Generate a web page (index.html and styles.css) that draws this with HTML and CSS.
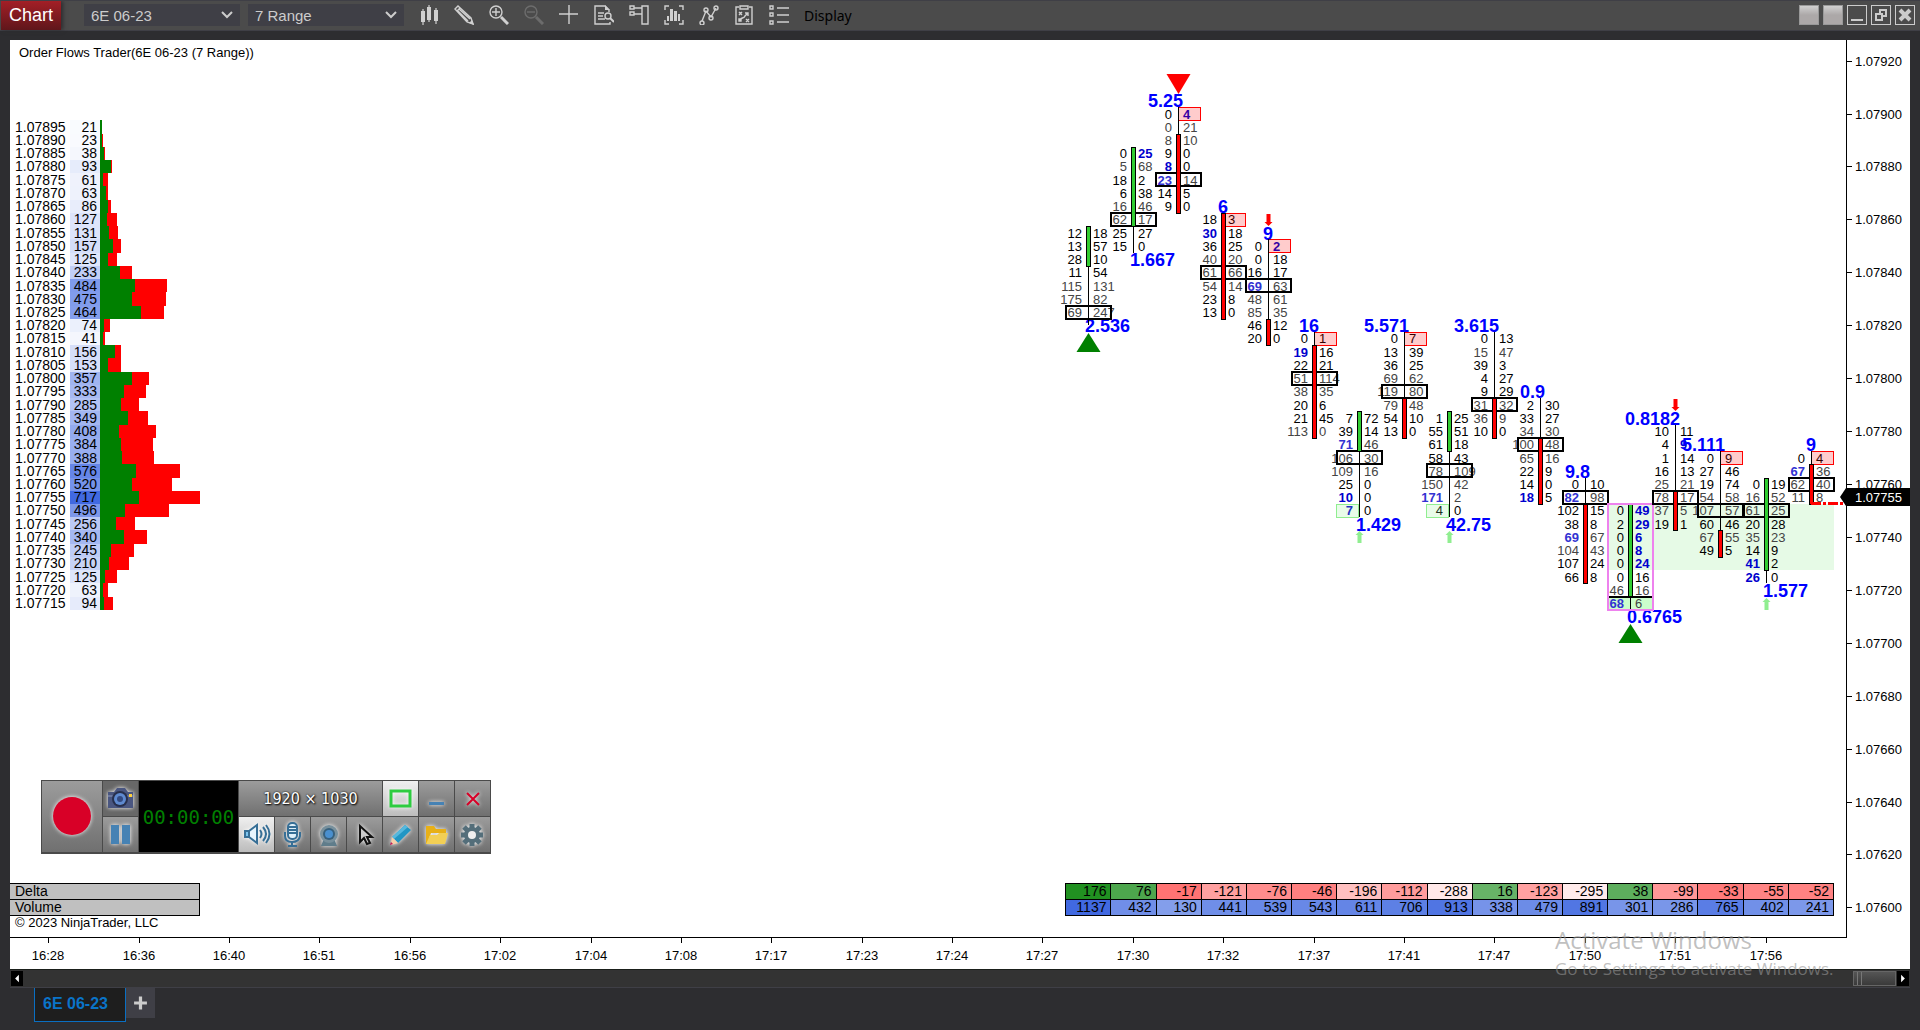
FILE: index.html
```
<!DOCTYPE html>
<html lang="en">
<head>
    <meta charset="UTF-8">
    <meta name="viewport" content="width=device-width, initial-scale=1.0">
    <title>Chart - 6E 06-23</title>
    <link rel="stylesheet" href="styles.css">
</head>
<body>
    <header class="toolbar">
        <h1 class="brand">Chart</h1>
        <select class="picker" aria-label="Instrument">
            <option>6E 06-23</option>
        </select>
        <select class="picker" aria-label="Interval">
            <option>7 Range</option>
        </select>

        <nav class="tools">
            <button class="tool" aria-label="Chart style">
                <svg viewBox="0 0 20 20"><path d="M4 4v16M10 0v17M17 3v16" stroke-width="1.2"/><path class="solid" d="M2 6h4v11H2zM8 2h4v13H8zM15 5h4v11h-4z"/></svg>
            </button>
            <button class="tool" aria-label="Drawing tools">
                <svg viewBox="0 0 20 20"><path d="M1 4l3-3 13 12 2 6-6-2zM3 6l3-3M5 4l11 10M4 6l10 10" /><path class="solid" d="M15 18l3-3 2 5z"/></svg>
            </button>
            <button class="tool" aria-label="Zoom in">
                <svg viewBox="0 0 20 20"><circle cx="7" cy="7" r="6"/><path d="M3 7h8M7 3v8"/><path d="M12 12l7 7" stroke-width="3"/></svg>
            </button>
            <button class="tool" aria-label="Zoom out" disabled>
                <svg viewBox="0 0 20 20"><circle cx="7" cy="7" r="6"/><path d="M3 7h8"/><path d="M12 12l7 7" stroke-width="3"/></svg>
            </button>
            <button class="tool" aria-label="Cross hair">
                <svg viewBox="0 0 20 20"><path d="M10 0v19M0 9h19"/></svg>
            </button>
            <button class="tool" aria-label="Data series">
                <svg viewBox="0 0 20 20"><path d="M16 17v2H1V1h10l4 4v2M4 8h6M4 11h5M4 14h7"/><path class="solid" d="M11 0l5 5h-5z"/><circle cx="14" cy="11" r="3"/><path d="M16 13l4 4" stroke-width="2"/></svg>
            </button>
            <button class="tool" aria-label="Chart trader">
                <svg viewBox="0 0 20 20"><path d="M13 1h6v18h-6zM1 1h4v3H1zM1 7h4v3H1zM5 3h8M5 9h8"/></svg>
            </button>
            <button class="tool" aria-label="Data box">
                <svg viewBox="0 0 20 20"><path d="M1 5V1h4M15 1h4v4M1 15v4h4M15 19h4v-4"/><path class="solid" d="M3 11h2v5H3zM6 4h3v12H6zM10 6h3v10h-3zM14 9h2v7h-2z"/></svg>
            </button>
            <button class="tool" aria-label="Indicators">
                <svg viewBox="0 0 20 20"><path d="M3 16l4-10 5 6 5-9"/><circle cx="3" cy="18" r="2"/><circle cx="7" cy="5" r="2"/><circle cx="12" cy="13" r="2"/><circle cx="17" cy="3" r="2"/></svg>
            </button>
            <button class="tool" aria-label="Strategies">
                <svg viewBox="0 0 20 20"><path d="M5 2H2v17h16V2h-3M6 1h8v3H6zM5 7l3 3M8 7l-3 3M12 14l3 3M15 14l-3 3M6 16c0-4 4-2 5-5l3-3M11 8h3v3M5 14h2v2H5z"/></svg>
            </button>
            <button class="tool" aria-label="Properties">
                <svg viewBox="0 0 20 20"><path d="M1 1h3v3H1zM1 8h3v3H1zM1 16h3v3H1zM8 3h12M8 10h12M8 17h12"/></svg>
            </button>
            <button class="display">Display</button>
        </nav>

        <div class="window-buttons">
            <button class="link-box" aria-label="Instrument link"></button>
            <button class="link-box" aria-label="Interval link"></button>
            <button class="win" aria-label="Minimize"><svg viewBox="0 0 18 18"><path d="M3 14h12" stroke-width="2"/></svg></button>
            <button class="win" aria-label="Restore"><svg viewBox="0 0 18 18"><path d="M4 8h6v6H4zM8 7V4h6v6h-3" stroke-width="2"/></svg></button>
            <button class="win" aria-label="Close"><svg viewBox="0 0 18 18"><path d="M4 4l10 10M14 4L4 14" stroke-width="4"/></svg></button>
        </div>
    </header>

    <main class="chart" id="chart">
        <svg class="canvas" id="canvas"></svg>
        <p class="chart-title">Order Flows Trader(6E 06-23 (7 Range))</p>

        <div class="summary">
            <table>
                <tr id="delta"><th scope="row">Delta</th><td class="spacer"></td></tr>
                <tr id="volume"><th scope="row">Volume</th><td class="spacer"></td></tr>
            </table>
            <p class="copyright">© 2023 NinjaTrader, LLC</p>
        </div>

        <section class="recorder" aria-label="Screen recorder">
            <button class="record" aria-label="Record"><svg viewBox="0 0 60 71"><circle cx="30" cy="35" r="19" fill="#d80027"/></svg></button>
            <button class="dark" aria-label="Take screenshot">
                <svg viewBox="0 0 35 35"><path d="M5 11h6l3-4h8l3 4h5v16H5z" fill="#4a5680"/><path d="M5 14h25v2H5z" fill="#6b78a0"/><circle cx="17" cy="18" r="8" fill="#28304d"/><circle cx="17" cy="18" r="6" fill="#5f8ad0"/><circle cx="17" cy="18" r="3" fill="#344a80"/><path d="M26 13h3v3h-3z" fill="#ffd23c"/></svg>
            </button>
            <output class="timer">00:00:00</output>
            <output class="size">1920 × 1030</output>
            <button class="lit" aria-label="Region"><svg viewBox="0 0 35 35"><path d="M8 10h19v15H8z" fill="none" stroke="#2ecc40" stroke-width="3"/></svg></button>
            <button aria-label="Minimize recorder"><svg viewBox="0 0 35 35"><path d="M10 21h15v3H10z" fill="#4682b4"/></svg></button>
            <button aria-label="Close recorder"><svg viewBox="0 0 35 35"><path d="M12 12l12 12M24 12L12 24" stroke="#d80027" stroke-width="2"/></svg></button>
            <button aria-label="Pause"><svg viewBox="0 0 35 35"><path d="M8 8h8v19H8zM19 8h8v19h-8z" fill="#4682b4"/></svg></button>
            <button class="lit" aria-label="Sound"><svg viewBox="0 0 35 35" fill="none" stroke="#376f96" stroke-width="2"><path d="M6 14h4l8-6v18l-8-6H6z" fill="#e8f5fd"/><path d="M6 14h4v6H6z" fill="#7cc4ee"/><path d="M21 13q3 4 0 8M24 10q6 7 0 14M27 8q7 9 0 18"/></svg></button>
            <button aria-label="Microphone"><svg viewBox="0 0 35 35" fill="none" stroke="#376f96" stroke-width="2"><rect x="13" y="6" width="9" height="16" rx="4" fill="#dff0fa"/><path d="M13 10h9M13 13h9M13 16h9M10 15v4q0 6 7 6t8-6v-4M17 25v3M13 29h9"/></svg></button>
            <button aria-label="Webcam"><svg viewBox="0 0 35 35"><path d="M12 24h12l2 5H10z" fill="#607d8b"/><circle cx="18" cy="17" r="9" fill="#78909c"/><circle cx="18" cy="17" r="6" fill="#37607d"/><circle cx="18" cy="17" r="4" fill="#4a90cf"/></svg></button>
            <button aria-label="Cursor"><svg viewBox="0 0 35 35"><path d="M13 9v16l4-4 3 6 3-1-3-6h5z" fill="#ccc" stroke="#111" stroke-width="2"/></svg></button>
            <button aria-label="Draw"><svg viewBox="0 0 35 35"><path d="M22 8l6 5-13 13-6-6z" fill="#2196c4"/><path d="M22 8l3 2-14 12-2-2z" fill="#56b8dd"/><path d="M9 20l6 6-7 2z" fill="#f6cfa8"/><path d="M8 25l2 2-3 1z" fill="#c2185b"/></svg></button>
            <button aria-label="Open folder"><svg viewBox="0 0 35 35"><path d="M7 9h8l2 3h10v4H12L8 27H7z" fill="#e8b017"/><path d="M11 18h7l2-2h9l-3 11H7z" fill="#f2cf55"/></svg></button>
            <button aria-label="Settings"><svg viewBox="0 0 35 35"><path d="M17 7v22M6 18h22M9 10l16 16M25 10L9 26" stroke="#546e7a" stroke-width="5"/><circle cx="17" cy="18" r="8" fill="#546e7a"/><circle cx="17" cy="18" r="4" fill="#eee"/></svg></button>
        </section>
    </main>

    <div class="scroll">
        <button class="arrow" aria-label="Scroll left"><svg viewBox="0 0 12 16"><path d="M8 4v8L4 8z"/></svg></button>
        <div class="thumb"></div>
        <button class="arrow" aria-label="Scroll right"><svg viewBox="0 0 12 16"><path d="M4 4v8l4-4z"/></svg></button>
    </div>

    <footer class="tabs">
        <a class="tab" href="#chart">6E 06-23</a>
        <button class="add" aria-label="Add tab"><svg viewBox="0 0 14 14"><path d="M7 1v12M1 7h12"/></svg></button>
    </footer>

    <div class="watermark">
        <p class="watermark-title">Activate Windows</p>
        <p>Go to Settings to activate Windows.</p>
    </div>

    <script src="chart.js"></script>
</body>
</html>
```

FILE: styles.css
```
* {
    box-sizing: border-box;
}

body {
    margin: 0;
    height: 100vh;
    display: flex;
    flex-direction: column;
    background: #2d2d30;
    border-top: 1px solid #3f3f46;
    font-family: "Liberation Sans", Arial, sans-serif;
    font-size: 13px;
    overflow: hidden;
    position: relative;
}

button {
    padding: 0;
    border: 0;
    background: none;
    font: inherit;
}

button svg {
    display: block;
    width: 100%;
    height: 100%;
}

p {
    margin: 0;
}

/* Top bar */
.toolbar {
    height: 30px;
    flex: none;
    display: flex;
    align-items: center;
    gap: 8px;
    padding: 0 5px 1px 1px;
    background: #4b4b4b;
    border-bottom: 1px solid #3f3f46;
}

.brand {
    align-self: flex-start;
    margin: 0 15px 0 0;
    width: 60px;
    height: 29px;
    line-height: 29px;
    text-align: center;
    font-size: 18px;
    font-weight: normal;
    color: #fff;
    background: linear-gradient(#a31f26, #5f161b);
    box-shadow: 2px 0 4px #2d2d30;
}

.picker {
    width: 156px;
    height: 22px;
    padding: 0 7px;
    border: 0;
    appearance: none;
    background-color: #3f3f46;
    background-image: url("data:image/svg+xml,%3Csvg xmlns='http://www.w3.org/2000/svg' width='12' height='8'%3E%3Cpath d='M1 1l5 5 5-5' fill='none' stroke='%23ccc' stroke-width='2'/%3E%3C/svg%3E");
    background-repeat: no-repeat;
    background-position: right 7px center;
    color: #ccc;
    font-family: inherit;
    font-size: 15px;
}

.tools {
    display: flex;
    align-items: center;
    gap: 15px;
    margin-left: 7px;
}

.tool {
    width: 20px;
    height: 20px;
}

.tool svg {
    fill: none;
    stroke: #d0d0d0;
    stroke-width: 1.4;
}

.tool .solid {
    fill: #d0d0d0;
    stroke: none;
}

.tool:disabled {
    opacity: 0.25;
}

.display {
    color: #000;
    font-family: "Noto Sans", sans-serif;
    font-size: 14px;
}

.window-buttons {
    margin-left: auto;
    display: flex;
    gap: 4px;
}

.link-box,
.win {
    width: 20px;
    height: 20px;
    border: 1px solid #999;
}

.link-box {
    background: linear-gradient(#d0d0d0, #aca8a8 50%);
}

.win {
    border-color: #ccc;
}

.win svg {
    fill: none;
    stroke: #ccc;
}

/* Chart panel */
.chart {
    flex: 1;
    min-height: 0;
    position: relative;
    margin: 9px 10px 0;
    background: #fff;
    color: #000;
}

.canvas {
    position: absolute;
    width: 100%;
    height: 100%;
}

.canvas text {
    font-size: 13px;
    fill: #000;
}

.canvas .end { text-anchor: end; }
.canvas .mid { text-anchor: middle; }
.canvas .axis { stroke: #000; shape-rendering: crispEdges; }
.canvas .shape { shape-rendering: crispEdges; }
.canvas .profile { font-size: 14px; }
.canvas .dim { fill: #444; }
.canvas .hot { fill: #0000cd; font-weight: bold; }
.canvas .hot.dim { fill: #3232d2; }
.canvas .ratio { font-size: 18px; font-weight: bold; fill: #00f; }
.canvas .marker { fill: #fff; }

.chart-title {
    position: absolute;
    left: 9px;
    top: 5px;
    line-height: 15px;
}

.summary {
    position: absolute;
    left: 0;
    right: 76px;
    bottom: 39px;
}

.summary table {
    width: 100%;
    table-layout: fixed;
    border-collapse: collapse;
    font-size: 14px;
    line-height: 15px;
}

.summary th,
.summary td {
    padding: 0 4px;
    border: 1px solid #000;
    text-align: right;
}

.summary th {
    width: 10.4%;
    padding-left: 5px;
    border-left: 0;
    font-weight: normal;
    text-align: left;
    background: #c0c0c0;
}

.summary .spacer {
    width: 47.5%;
    border: 0;
}

.copyright {
    padding-left: 5px;
    line-height: 14px;
}

/* Screen recorder */
.recorder {
    position: absolute;
    left: 31px;
    bottom: 115px;
    display: grid;
    grid-template-columns: 60px 35px 99px repeat(7, 35px);
    grid-template-rows: 35px 35px;
    gap: 1px;
    padding: 1px 1px 2px;
    background: #4a4a4a;
}

.recorder button {
    background: linear-gradient(#9c9c9c, #707070);
}

.recorder svg {
    filter: drop-shadow(0 0 2px #fff);
}

.recorder .record {
    grid-row: span 2;
}

.recorder .dark {
    background: #686868;
}

.recorder .lit {
    background: linear-gradient(#f0f0f0, #bcbcbc);
}

.timer {
    grid-row: span 2;
    display: grid;
    place-items: center;
    background: #000;
    color: #008000;
    font-family: "DejaVu Sans Mono", monospace;
    font-size: 19px;
}

.size {
    grid-column: span 4;
    display: grid;
    place-items: center;
    background: linear-gradient(#9c9c9c, #707070);
    color: #fff;
    font-family: "DejaVu Sans Condensed", "DejaVu Sans", sans-serif;
    font-size: 16px;
    text-shadow: 1px 1px 2px #000, 0 0 2px #000;
}

/* Scroll bar and tabs */
.scroll {
    flex: none;
    height: 19px;
    display: flex;
    margin: 0 10px;
    padding: 1px;
    background: #333;
    border-top: 1px solid #1a1f1a;
    border-bottom: 1px solid #3f3f46;
}

.arrow {
    width: 12px;
    background: #000;
    fill: #fff;
}

.thumb {
    width: 43px;
    margin: 0 1px 0 auto;
    border: 1px solid #666;
    background: linear-gradient(90deg, transparent 3px, #777 3px 4px, transparent 4px 7px, #777 7px 8px, transparent 8px), linear-gradient(#555, #3a3a3a);
}

.tabs {
    flex: none;
    height: 42px;
    display: flex;
    align-items: flex-start;
    padding-left: 34px;
}

.tab {
    height: 34px;
    padding: 0 17px 0 8px;
    border: 1px solid #0a6fc2;
    border-top: 0;
    background: #1e1e1e;
    color: #0a74c8;
    font-size: 16px;
    font-weight: bold;
    line-height: 32px;
    text-decoration: none;
}

.add {
    width: 29px;
    height: 30px;
    padding: 7px;
    background: #3f3f46;
    stroke: #ccc;
    stroke-width: 3;
}

.watermark {
    position: absolute;
    right: 80px;
    bottom: 49px;
    width: 285px;
    color: rgba(150, 150, 150, 0.6);
    font-family: "Open Sans", sans-serif;
    font-size: 17px;
    line-height: 24px;
    white-space: nowrap;
    pointer-events: none;
}

.watermark-title {
    font-size: 24px;
    line-height: 34px;
}
```

FILE: chart.js
```
const TICK = 5;
const TOP_PRICE = 107920;
const AXIS_WIDTH = 64;
const AXIS_HEIGHT = 32;

// volume at price, from 1.07895 down; second value is the width of the buy part
const profile = [
    [21, 2], [23, 2], [38, 4], [93, 11], [61, 3], [63, 6], [86, 8], [127, 7], [131, 9], [157, 13],
    [125, 8], [233, 20], [484, 35], [475, 32], [464, 41], [74, 4], [41, 3], [156, 15], [153, 8],
    [357, 32], [333, 24], [285, 21], [349, 28], [408, 19], [384, 21], [388, 22], [576, 36],
    [520, 32], [717, 39], [496, 25], [256, 16], [340, 24], [245, 11], [210, 9], [125, 5], [63, 3], [94, 4]
];

// at: ticks below the top price, body: first and last row, ~ dim row, * imbalance
const bars = [
    { at: 13, body: [13, 15], up: true, poc: 19, low: '2.536', sign: 'buy', rows: '12|18 13|57 28|10 11|54 ~115|131 ~175|82 ~69|247' },
    { at: 7, body: [7, 12], up: true, poc: 12, low: '1.667', rows: '0|*25 ~5|68 18|2 6|38 ~16|46 ~62|17 25|27 15|0' },
    { at: 4, body: [6, 11], poc: 9, high: '5.25', sign: 'sell', box: true, rows: '0|*4 ~0|21 ~8|10 9|0 *8|0 ~*23|14 14|5 9|0' },
    { at: 12, body: [12, 19], poc: 16, high: '6', box: true, rows: '18|3 *30|18 36|25 ~40|20 ~61|66 ~54|14 23|8 13|0' },
    { at: 14, body: [20, 21], poc: 17, high: '9', sign: 'down', box: true, rows: '0|*2 0|18 16|17 ~*69|63 ~48|61 ~85|35 46|12 20|0' },
    { at: 21, body: [22, 28], poc: 24, high: '16', box: true, rows: '0|1 *19|16 22|21 ~51|114 ~38|35 20|6 21|45 ~113|0' },
    { at: 27, body: [27, 29], up: true, poc: 30, low: '1.429', sign: 'up', box: true, rows: '7|72 39|14 ~*71|46 ~106|30 ~109|16 25|0 *10|0 *7|0' },
    { at: 21, body: [26, 28], poc: 25, high: '5.571', box: true, rows: '0|7 13|39 36|25 ~69|62 ~119|80 ~79|48 54|10 13|0' },
    { at: 27, body: [27, 29], up: true, poc: 31, low: '42.75', sign: 'up', box: true, rows: '1|25 55|51 61|18 58|43 ~78|109 ~150|42 ~*171|2 4|0' },
    { at: 21, body: [26, 28], poc: 26, high: '3.615', rows: '0|13 ~15|47 39|3 4|27 9|29 ~31|32 ~36|9 10|0' },
    { at: 26, body: [29, 33], poc: 29, high: '0.9', rows: '2|30 33|27 ~34|30 ~100|48 ~65|16 22|9 14|0 *18|5' },
    { at: 32, body: [34, 39], poc: 33, high: '9.8', rows: '0|10 ~*82|98 102|15 38|8 ~*69|67 ~104|43 107|24 66|8' },
    { at: 34, body: [34, 40], up: true, low: '0.6765', sign: 'buy', zone: true, rows: '0|*49 2|*29 0|*6 0|*8 0|*24 0|16 ~46|16 ~*68|6' },
    { at: 28, body: [33, 35], poc: 33, high: '0.8182', sign: 'down', rows: '10|11 4|*9 1|14 16|13 ~25|21 ~78|17 ~37|5 19|1' },
    { at: 30, body: [36, 37], poc: 34, high: '5.111', box: true, rows: '0|9 27|46 19|74 ~54|58 ~107|57 60|46 ~67|55 49|5' },
    { at: 32, body: [32, 38], up: true, poc: 34, low: '1.577', sign: 'up', rows: '0|19 ~16|52 ~61|25 20|28 ~35|23 14|9 *41|2 *26|0' },
    { at: 30, body: [31, 33], poc: 32, high: '9', box: true, rows: '0|4 ~*67|36 ~62|40 ~11|8' }
];

const deltas = [176, 76, -17, -121, -76, -46, -196, -112, -288, 16, -123, -295, 38, -99, -33, -55, -52];
const volumes = [1137, 432, 130, 441, 539, 543, 611, 706, 913, 338, 479, 891, 301, 286, 765, 402, 241];
const times = ['16:28', '16:36', '16:40', '16:51', '16:56', '17:02', '17:04', '17:08', '17:17', '17:23',
    '17:24', '17:27', '17:30', '17:32', '17:37', '17:41', '17:47', '17:50', '17:51', '17:56'];

const canvas = document.getElementById('canvas');

function add(name, attrs, text) {
    const el = document.createElementNS('http://www.w3.org/2000/svg', name);
    for (const key in attrs) el.setAttribute(key, attrs[key]);
    if (text !== undefined) el.textContent = text;
    canvas.appendChild(el);
}

function rect(x, y, width, height, fill, stroke = 'none', line = 1) {
    add('rect', { class: 'shape', x, y, width, height, fill, stroke, 'stroke-width': line });
}

function text(x, y, value, cls = '') {
    add('text', { x, y, class: cls }, value);
}

function mix(from, to, t) {
    return `rgb(${from.map((c, i) => Math.round(c + (to[i] - c) * t)).join(',')})`;
}

function draw() {
    canvas.replaceChildren();
    const w = canvas.clientWidth - AXIS_WIDTH;
    const h = canvas.clientHeight - AXIS_HEIGHT;
    const tick = h / 67.8;
    const step = w / 40.63;
    const y = k => Math.round((k + 1.56) * tick);
    const edge = k => Math.round((k + 1.07) * tick);
    const x = i => Math.floor(w - 34.8 - (bars.length - 1 - i) * step);

    // Axes
    add('path', { class: 'axis', fill: 'none', d: `M${w + 0.5} 0V${h + 0.5}H0` });
    for (let k = 0; k <= 64; k += 4) {
        add('path', { class: 'axis', d: `M${w} ${y(k) + 0.5}h6` });
        text(w + 9, y(k) + 5, ((TOP_PRICE - k * TICK) / 100000).toFixed(5));
    }
    times.forEach((time, i) => {
        const tx = x(15 - (times.length - 1 - i) * 2);
        add('path', { class: 'axis', d: `M${tx + 0.5} ${h}v6` });
        text(tx, h + 23, time, 'mid');
    });

    // Volume profile
    profile.forEach(([volume, buy], i) => {
        const k = i + 5;
        const top = edge(k);
        const height = edge(k + 1) - top;
        rect(60, top, 30, height, mix([255, 255, 255], [65, 105, 225], volume / 717));
        rect(90, top, Math.floor(volume * 100 / 717), height, '#f00');
        rect(90, top, buy, height, '#008000');
        text(5, y(k) + 5, ((TOP_PRICE - k * TICK) / 100000).toFixed(5), 'profile');
        text(87, y(k) + 5, volume, 'profile end');
    });

    // Support zone
    rect(x(12) - 22, edge(34), x(16) + 23 - x(12) + 22, edge(39) - edge(34), '#e6fae6');

    bars.forEach((bar, i) => {
        const c = x(i);
        const rows = bar.rows.split(' ');
        const end = bar.at + rows.length;

        if (bar.zone) rect(c - 22, edge(end - 1), 45, edge(end) - edge(end - 1), '#ccffcc');

        rows.forEach((row, n) => {
            const dim = row[0] === '~' ? ' dim' : '';
            row.replace('~', '').split('|').forEach((cell, side) => {
                const hot = cell[0] === '*' ? ' hot' : '';
                const cls = (side ? '' : 'end') + dim + hot;
                text(side ? c + 5 : c - 6, y(bar.at + n) + 5, cell.replace('*', ''), cls);
            });
        });

        // Exhaustion prints are tinted over their numbers
        if (bar.box && bar.high) rect(c + 0.5, edge(bar.at) + 0.5, 22, 13, 'rgba(255, 0, 0, 0.2)', '#f00');
        if (bar.box && bar.low) rect(c - 22.5, edge(end - 1) + 0.5, 22, 13, 'rgba(144, 238, 144, 0.2)', '#90ee90');

        if (bar.high) text(c + 5, y(bar.at - 1) + 7, bar.high, 'ratio end');
        if (bar.low) text(c - 3, y(end) + 7, bar.low, 'ratio');

        if (bar.poc) rect(c - 22, edge(bar.poc), 45, 13, 'none', '#000', 2);
        rect(c, edge(bar.at), 1, edge(end) - edge(bar.at) + (i === 0 ? 6 : 0), '#000');
        rect(c - 1.5, edge(bar.body[0]) + 0.5, 4, edge(bar.body[1] + 1) - edge(bar.body[0]), bar.up ? '#32cd32' : '#f00', '#000');

        if (bar.zone) {
            rect(c - 22, edge(end - 1) - 1, 45, 2, '#000');
            rect(c - 22, edge(bar.at), 45, edge(end) - edge(bar.at), 'none', 'violet', 2);
        }

        const below = edge(end + 1);
        const above = edge(bar.at - 1);
        if (bar.sign === 'buy') add('path', { fill: 'green', d: `M${c + 0.5} ${below + 1}l12 19h-24z` });
        if (bar.sign === 'sell') add('path', { fill: 'red', d: `M${c + 0.5} ${above}l12 -20h-24z` });
        if (bar.sign === 'up') add('path', { fill: 'lightgreen', d: `M${c + 0.5} ${below + 1}l4 4h-2v8h-4v-8h-2z` });
        if (bar.sign === 'down') add('path', { fill: 'red', d: `M${c + 0.5} ${above}l4 -4h-2v-8h-4v8h-2z` });
    });

    // Last price
    const last = y(33);
    add('path', { stroke: '#f00', 'stroke-width': 3, 'stroke-dasharray': '10 2 3 2', d: `M${x(16)} ${edge(34) - 0.5}H${w}` });
    add('path', { d: `M${w - 6} ${last}l6 -9h64v18h-64z` });
    text(w + 9, last + 5, '1.07755', 'marker');
}

function fillRow(id, values, colour) {
    const row = document.getElementById(id);
    values.forEach(value => {
        const cell = row.insertCell();
        cell.textContent = value;
        cell.style.backgroundColor = colour(value);
    });
}

fillRow('delta', deltas, d => d > 0
    ? mix([110, 182, 110], [33, 145, 33], d / 176)
    : mix([255, 108, 108], [255, 235, 235], -d / 295));
fillRow('volume', volumes, v => mix([140, 165, 236], [65, 105, 225], v / 1137));

draw();
window.addEventListener('resize', draw);
```
